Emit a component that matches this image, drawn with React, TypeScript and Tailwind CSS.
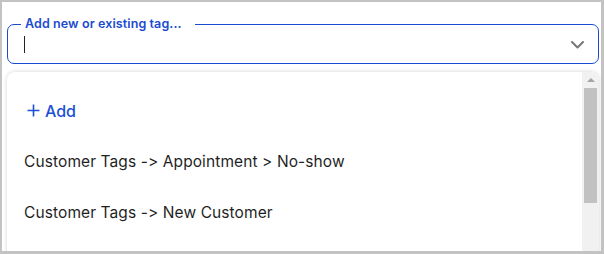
import React from 'react';

const font = { fontFamily: 'Inter, "Noto Sans", sans-serif' };

const options = [
  'Customer Tags -> Appointment > No-show',
  'Customer Tags -> New Customer',
];

function Chevron() {
  return (
    <svg width="13" height="8" viewBox="0 0 13 8" fill="none">
      <polyline points="1,1 6.5,6.5 12,1" stroke="#77767b" strokeWidth="2" strokeLinecap="round" strokeLinejoin="round" />
    </svg>
  );
}

function PlusIcon() {
  return (
    <svg width="13" height="13" viewBox="0 0 13 13" fill="none">
      <path d="M6.5 0.5v12M0.5 6.5h12" stroke="#1b4fd6" strokeWidth="1.6" />
    </svg>
  );
}

export default function App() {
  return (
    <div
      className="w-[604px] h-[254px] overflow-hidden bg-white border-l-2 border-t-2 border-r-[3px] border-b-[3px] border-[#c3c3c3] [font-feature-settings:'calt'_0,'liga'_0]"
      style={font}
    >
      <div className="pl-[5px] pt-[22px]">
        {/* tag input */}
        <div className="relative w-[592px] h-[40px] rounded-[7px] border border-[#1a4bd0] flex items-center pl-[16px] pr-[14px]">
          <span className="absolute -top-[9px] left-[13px] bg-white pl-[4px] pr-[13px] text-[12.5px] leading-[16px] font-semibold text-[#1a4bd0] tracking-[0.1px]">
            Add new or existing tag...
          </span>
          <div className="w-px h-[17px] bg-[#222]" />
          <div className="ml-auto flex items-center pt-[2px]">
            <Chevron />
          </div>
        </div>

        {/* dropdown */}
        <div className="mt-[8px] w-[592px] h-[200px] rounded-t-[8px] bg-white shadow-[0_0_4px_rgba(0,0,0,0.18)] overflow-hidden flex">
          <ul className="flex-1 pt-[13px]">
            <li className="h-[51px] flex items-center pl-[20px] gap-[5px] text-[16px] font-medium text-[#1b4fd6]">
              <PlusIcon />
              <span>Add</span>
            </li>
            {options.map((o) => (
              <li key={o} className="h-[51px] flex items-center pl-[17px] text-[15.5px] tracking-[0.1px] text-[#1f1f1f]">
                {o}
              </li>
            ))}
          </ul>
          <div className="w-[17px] bg-[#f1f1f1] flex flex-col items-center">
            <div className="h-[16px] flex items-center justify-center">
              <div className="w-0 h-0 border-l-[4px] border-r-[4px] border-b-[4px] border-l-transparent border-r-transparent border-b-[#a3a3a3]" />
            </div>
            <div className="w-[13px] h-[115px] bg-[#c1c1c1]" />
          </div>
        </div>
      </div>
    </div>
  );
}
